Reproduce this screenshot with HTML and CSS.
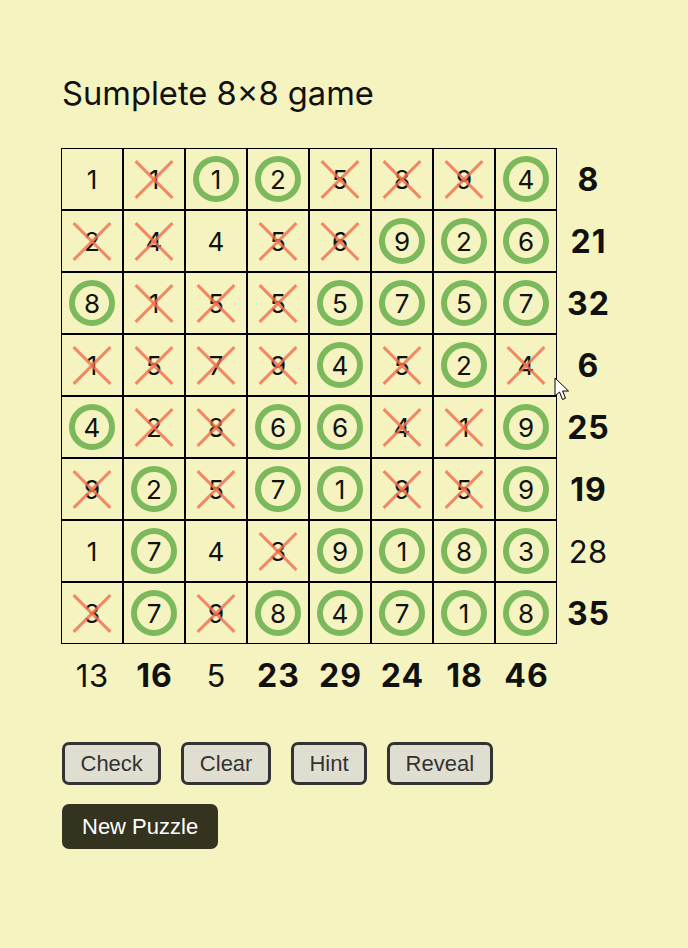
FILE: index.html
```html
<!DOCTYPE html>
<html>
<head>
<meta charset="utf-8">
<link rel="stylesheet" href="styles.css">
</head>
<body>
<div class="page">
  <h1 class="title">Sumplete 8×8 game</h1>
  <table class="board">
    <tbody>
      <tr>
        <td class="cell">1</td><td class="cell x">1</td><td class="cell o">1</td><td class="cell o">2</td><td class="cell x">5</td><td class="cell x">8</td><td class="cell x">9</td><td class="cell o">4</td><td class="sum done">8</td>
      </tr>
      <tr>
        <td class="cell x">2</td><td class="cell x">4</td><td class="cell">4</td><td class="cell x">5</td><td class="cell x">6</td><td class="cell o">9</td><td class="cell o">2</td><td class="cell o">6</td><td class="sum done">21</td>
      </tr>
      <tr>
        <td class="cell o">8</td><td class="cell x">1</td><td class="cell x">5</td><td class="cell x">5</td><td class="cell o">5</td><td class="cell o">7</td><td class="cell o">5</td><td class="cell o">7</td><td class="sum done">32</td>
      </tr>
      <tr>
        <td class="cell x">1</td><td class="cell x">5</td><td class="cell x">7</td><td class="cell x">9</td><td class="cell o">4</td><td class="cell x">5</td><td class="cell o">2</td><td class="cell x">4</td><td class="sum done">6</td>
      </tr>
      <tr>
        <td class="cell o">4</td><td class="cell x">2</td><td class="cell x">8</td><td class="cell o">6</td><td class="cell o">6</td><td class="cell x">4</td><td class="cell x">1</td><td class="cell o">9</td><td class="sum done">25</td>
      </tr>
      <tr>
        <td class="cell x">9</td><td class="cell o">2</td><td class="cell x">5</td><td class="cell o">7</td><td class="cell o">1</td><td class="cell x">9</td><td class="cell x">5</td><td class="cell o">9</td><td class="sum done">19</td>
      </tr>
      <tr>
        <td class="cell">1</td><td class="cell o">7</td><td class="cell">4</td><td class="cell x">3</td><td class="cell o">9</td><td class="cell o">1</td><td class="cell o">8</td><td class="cell o">3</td><td class="sum">28</td>
      </tr>
      <tr>
        <td class="cell x">3</td><td class="cell o">7</td><td class="cell x">9</td><td class="cell o">8</td><td class="cell o">4</td><td class="cell o">7</td><td class="cell o">1</td><td class="cell o">8</td><td class="sum done">35</td>
      </tr>
      <tr>
        <td class="sum">13</td><td class="sum done">16</td><td class="sum">5</td><td class="sum done">23</td><td class="sum done">29</td><td class="sum done">24</td><td class="sum done">18</td><td class="sum done">46</td><td class="sum"></td>
      </tr>
    </tbody>
  </table>
  <div class="controls">
    <button class="btn">Check</button>
    <button class="btn">Clear</button>
    <button class="btn">Hint</button>
    <button class="btn">Reveal</button>
  </div>
  <div class="controls second">
    <button class="btn primary">New Puzzle</button>
  </div>
</div>
<svg class="cursor" width="16" height="26" viewBox="0 0 16 26">
  <path d="M1 1 L1 19 L5.5 15 L8.5 22.5 L11.5 21.2 L8.6 14 L14.5 14 Z" fill="#fff" stroke="#000" stroke-width="1" stroke-linejoin="round"/>
</svg>
</body>
</html>
```

FILE: styles.css
```css
html, body {
  margin: 0;
  padding: 0;
  background: #f5f3bf;
}

body {
  font-family: Inter, "Noto Sans", sans-serif;
  color: #111;
  position: relative;
  min-height: 948px;
}

.page {
  padding: 73px 0 0 62px;
}

.title {
  margin: 0 0 35px 0;
  font-size: 32.7px;
  font-weight: 400;
  line-height: 40px;
  color: #111;
}

.board {
  border-spacing: 0;
  margin-left: -1px;
}

.board td {
  width: 60px;
  height: 60px;
  padding: 0;
  text-align: center;
  vertical-align: middle;
  font-size: 26px;
}

.cell {
  border: 1px solid #000;
  position: relative;
}

.cell.o::before {
  content: "";
  position: absolute;
  left: 50%;
  top: 50%;
  width: 34px;
  height: 34px;
  margin: -23px 0 0 -23px;
  border: 6px solid #7cb85c;
  border-radius: 50%;
}

.cell.x::before,
.cell.x::after {
  content: "";
  position: absolute;
  left: 50%;
  top: 50%;
  width: 52px;
  height: 3px;
  margin: -1.5px 0 0 -26px;
  background: rgba(240, 110, 80, 0.8);
  transform: rotate(45deg);
}

.cell.x::after {
  transform: rotate(-45deg);
}

.board td.sum {
  border: 1px solid transparent;
  font-size: 31px;
  font-weight: 400;
  letter-spacing: 0.5px;
  text-indent: 0.5px;
}

.board td.sum.done {
  font-size: 32px;
  font-weight: 700;
  letter-spacing: 1px;
  text-indent: 1px;
}

.controls {
  display: flex;
  gap: 20px;
  margin-top: 36px;
}

.controls.second {
  margin-top: 19px;
}

.btn {
  font-family: "Liberation Sans", Arial, sans-serif;
  font-size: 22px;
  line-height: 25px;
  color: #333;
  background: #e0ded0;
  border: 3px solid #333;
  border-radius: 7px;
  padding: 6px 15.5px;
  margin: 0;
}

.btn.primary {
  background: #34331f;
  border-color: #34331f;
  color: #fff;
  padding: 7px 17px;
}

.cursor {
  position: absolute;
  left: 554px;
  top: 377px;
}
```
